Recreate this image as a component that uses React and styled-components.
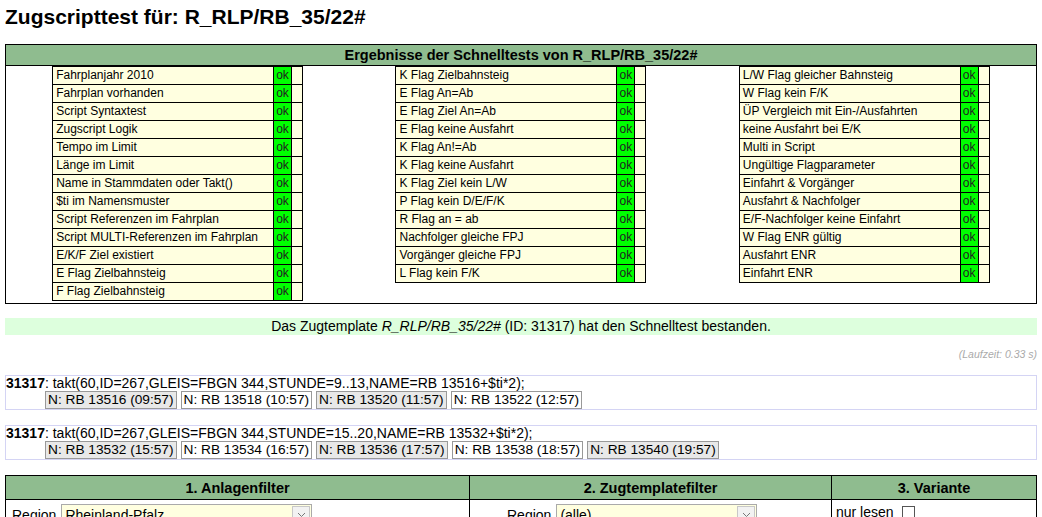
import React from 'react';
import styled, { createGlobalStyle } from 'styled-components';

const GlobalStyle = createGlobalStyle`
    body {
        margin      : 5px;
        background  : #fff;
        color       : #000;
        font-family : "Liberation Sans", Arial, sans-serif;
        font-size   : 14px;
    }
`;

const Title = styled.h1`
    margin      : 0 0 16px 0;
    font-size   : 21px;
    line-height : 23px;
    font-weight : bold;
`;

// Ergebnis-Kasten
const ResultBox = styled.div`
    border        : 1px solid #000;
    padding-bottom: 2px;
`;

const GreenHead = styled.div`
    height        : 20px;
    line-height   : 20px;
    background    : #8fbc8f;
    border-bottom : 1px solid #000;
    text-align    : center;
    font-weight   : bold;
    font-size     : 14.5px;
`;

const Columns = styled.div`
    display               : grid;
    grid-template-columns : 1fr 1fr 1fr;
    align-items           : start;
`;

const Column = styled.div`
    display         : flex;
    justify-content : center;
`;

const TestTable = styled.table`
    width           : 250px;
    table-layout    : fixed;
    border-collapse : collapse;
    font-size       : 12px;
`;

const Cell = styled.td`
    height      : 17px;
    padding     : 0 0 0 ${p => (p.$ok ? 2 : 3)}px;
    border      : 1px solid #000;
    line-height : 15px;
    white-space : nowrap;
    overflow    : hidden;
    background  : ${p => (p.$ok ? '#00ff00' : '#ffffe0')};
    color       : ${p => (p.$ok ? '#222' : '#000')};
`;

// Meldung + Laufzeit
const Passed = styled.div`
    margin-top  : 14px;
    height      : 17px;
    line-height : 17px;
    background  : #ddffdd;
    text-align  : center;
    font-size   : 14px;
`;

const Runtime = styled.div`
    margin-top  : 14px;
    text-align  : right;
    font-size   : 10.5px;
    line-height : 10px;
    font-style  : italic;
    color       : #aaa;
`;

// Takt-Kaesten
const TaktBox = styled.div`
    margin-top : ${p => p.$first ? 16 : 15}px;
    border     : 1px solid #d4d4f4;
`;

const TaktLine = styled.div`
    height      : 15px;
    line-height : 15px;
    font-size   : 14px;
    white-space : nowrap;
`;

const ChipRow = styled.div`
    display     : flex;
    gap         : 4px;
    padding-left: 39px;
`;

const Chip = styled.span`
    display     : inline-block;
    height      : 16px;
    line-height : 16px;
    padding     : 0 2px;
    border      : 1px solid #999;
    background  : ${p => (p.$grey ? '#e8e8e8' : '#fff')};
    font-size   : 13.7px;
    white-space : nowrap;
`;

// Filter-Tabelle
const FilterTable = styled.table`
    width           : 100%;
    margin-top      : 15px;
    border-collapse : collapse;
    table-layout    : fixed;
    border          : 1px solid #000;
`;

const HeadCell = styled.th`
    height      : 23px;
    background  : #8fbc8f;
    border      : 1px solid #000;
    font-size   : 14.5px;
    font-weight : bold;
    text-align  : center;
    padding     : 0;
`;

const BodyCell = styled.td`
    border         : 1px solid #000;
    vertical-align : top;
    padding        : 4px 0 0 ${p => p.$indent || 6}px;
    height         : 30px;
`;

const Field = styled.div`
    display     : flex;
    align-items : center;
    gap         : ${p => p.$gap || 5}px;
    font-size   : 14px;
`;

const Select = styled.div`
    display     : flex;
    width       : ${p => p.$w}px;
    height      : 20px;
    border      : 1px solid #aaa;
    background  : #ffffe0;
    font-size   : 14px;
    line-height : 20px;
`;

const SelectText = styled.span`
    flex         : 1;
    padding-left : 3px;
`;

const SelectArrow = styled.span`
    display         : flex;
    align-items     : center;
    justify-content : center;
    width           : 16px;
    margin          : 1px;
    border          : 1px solid #c8c8c8;
    background      : #f2f2f2;
`;

const CheckBox = styled.span`
    display    : inline-block;
    width      : 11px;
    height     : 11px;
    border     : 1px solid #555;
    background : #fff;
`;

const col1 = [
    'Fahrplanjahr 2010', 'Fahrplan vorhanden', 'Script Syntaxtest', 'Zugscript Logik',
    'Tempo im Limit', 'Länge im Limit', 'Name in Stammdaten oder Takt()', '$ti im Namensmuster',
    'Script Referenzen im Fahrplan', 'Script MULTI-Referenzen im Fahrplan', 'E/K/F Ziel existiert',
    'E Flag Zielbahnsteig', 'F Flag Zielbahnsteig',
];
const col2 = [
    'K Flag Zielbahnsteig', 'E Flag An=Ab', 'E Flag Ziel An=Ab', 'E Flag keine Ausfahrt',
    'K Flag An!=Ab', 'K Flag keine Ausfahrt', 'K Flag Ziel kein L/W', 'P Flag kein D/E/F/K',
    'R Flag an = ab', 'Nachfolger gleiche FPJ', 'Vorgänger gleiche FPJ', 'L Flag kein F/K',
];
const col3 = [
    'L/W Flag gleicher Bahnsteig', 'W Flag kein F/K', 'ÜP Vergleich mit Ein-/Ausfahrten',
    'keine Ausfahrt bei E/K', 'Multi in Script', 'Ungültige Flagparameter', 'Einfahrt & Vorgänger',
    'Ausfahrt & Nachfolger', 'E/F-Nachfolger keine Einfahrt', 'W Flag ENR gültig',
    'Ausfahrt ENR', 'Einfahrt ENR',
];

const takte = [
    {
        text  : ': takt(60,ID=267,GLEIS=FBGN 344,STUNDE=9..13,NAME=RB 13516+$ti*2);',
        chips : ['N: RB 13516 (09:57)', 'N: RB 13518 (10:57)', 'N: RB 13520 (11:57)', 'N: RB 13522 (12:57)'],
    },
    {
        text  : ': takt(60,ID=267,GLEIS=FBGN 344,STUNDE=15..20,NAME=RB 13532+$ti*2);',
        chips : ['N: RB 13532 (15:57)', 'N: RB 13534 (16:57)', 'N: RB 13536 (17:57)', 'N: RB 13538 (18:57)', 'N: RB 13540 (19:57)'],
    },
];

const Tests = ({ items }) => (
    <Column>
        <TestTable>
            <colgroup>
                <col style={{ width: 221 }} />
                <col style={{ width: 18 }} />
                <col style={{ width: 11 }} />
            </colgroup>
            <tbody>
                {items.map(name => (
                    <tr key={name}>
                        <Cell>{name}</Cell>
                        <Cell $ok>ok</Cell>
                        <Cell />
                    </tr>
                ))}
            </tbody>
        </TestTable>
    </Column>
);

const Arrow = () => (
    <SelectArrow>
        <svg width="9" height="6" viewBox="0 0 9 6">
            <path d="M1 1 L4.5 4.5 L8 1" fill="none" stroke="#777" strokeWidth="1" />
        </svg>
    </SelectArrow>
);

const App = () => {
    return (
        <>
            <GlobalStyle />
            <Title>Zugscripttest für: R_RLP/RB_35/22#</Title>

            <ResultBox>
                <GreenHead>Ergebnisse der Schnelltests von R_RLP/RB_35/22#</GreenHead>
                <Columns>
                    <Tests items={col1} />
                    <Tests items={col2} />
                    <Tests items={col3} />
                </Columns>
            </ResultBox>

            <Passed>
                Das Zugtemplate <i>R_RLP/RB_35/22#</i> (ID: 31317) hat den Schnelltest bestanden.
            </Passed>
            <Runtime>(Laufzeit: 0.33 s)</Runtime>

            {takte.map((t, i) => (
                <TaktBox key={i} $first={i === 0}>
                    <TaktLine><b>31317</b>{t.text}</TaktLine>
                    <ChipRow>
                        {t.chips.map((c, j) => (
                            <Chip key={c} $grey={j % 2 === 0}>{c}</Chip>
                        ))}
                    </ChipRow>
                </TaktBox>
            ))}

            <FilterTable>
                <colgroup>
                    <col style={{ width: 464 }} />
                    <col style={{ width: 362 }} />
                    <col />
                </colgroup>
                <thead>
                    <tr>
                        <HeadCell>1. Anlagenfilter</HeadCell>
                        <HeadCell>2. Zugtemplatefilter</HeadCell>
                        <HeadCell>3. Variante</HeadCell>
                    </tr>
                </thead>
                <tbody>
                    <tr>
                        <BodyCell>
                            <Field>
                                Region
                                <Select $w={249}><SelectText>Rheinland-Pfalz</SelectText><Arrow /></Select>
                            </Field>
                        </BodyCell>
                        <BodyCell $indent={37}>
                            <Field>
                                Region
                                <Select $w={199}><SelectText>(alle)</SelectText><Arrow /></Select>
                            </Field>
                        </BodyCell>
                        <BodyCell $indent={4}>
                            <Field $gap={8}>nur lesen<CheckBox /></Field>
                        </BodyCell>
                    </tr>
                </tbody>
            </FilterTable>
        </>
    );
};

export default App;
